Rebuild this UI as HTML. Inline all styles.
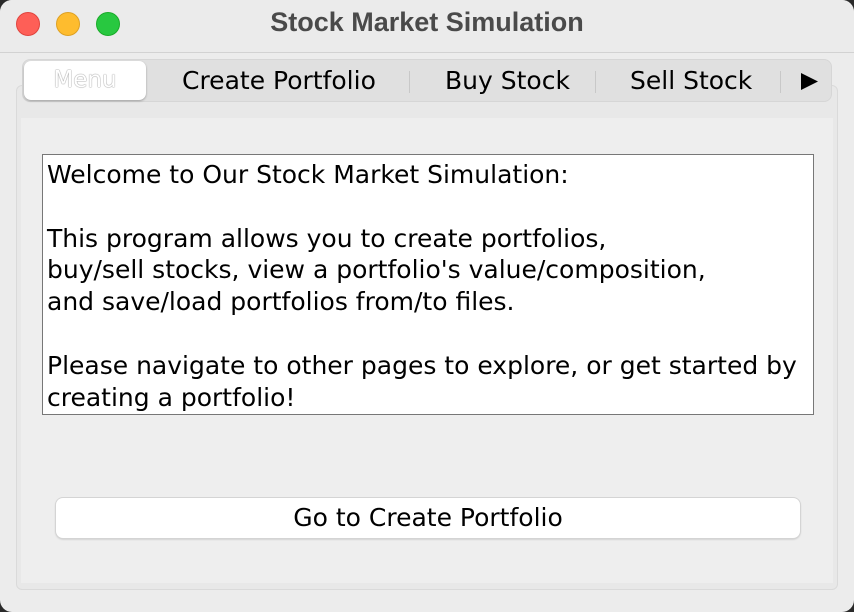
<!DOCTYPE html>
<html><head><style>
body{margin:0;width:854px;height:612px;background:#2a2a2a;overflow:hidden;font-family:"DejaVu Sans","Liberation Sans",sans-serif}
.win{position:absolute;left:0;top:0;width:854px;height:612px;background:#ececec;border-radius:12px;overflow:hidden}
.title{position:absolute;left:0;top:0;width:854px;height:52px;border-bottom:1px solid #d2d2d2;background:#ebebeb}
.dot{position:absolute;top:12px;width:24px;height:24px;border-radius:50%}
.t{position:absolute;left:0;width:854px;top:7px;text-align:center;font:bold 27px "Liberation Sans",sans-serif;color:#4a4a4a}
.panel{position:absolute;left:16px;top:85px;width:820px;height:503px;background:#e8e8e8;border:1px solid #dadada;border-radius:6px}
.inner{position:absolute;left:4px;top:32px;width:812px;height:465px;background:#eeeeee}
.tabs{position:absolute;left:22px;top:59px;width:810px;height:43px;background:#e0e0e0;border:1px solid #d6d6d6;border-radius:8px;box-sizing:border-box}
.tab{position:absolute;top:6px;font-size:25px;color:#000}
.sep{position:absolute;top:11px;width:1px;height:22px;background:#c8c8c8}
.sel{position:absolute;left:1px;top:1px;width:122px;height:39px;background:#fff;border-radius:7px;box-shadow:0 1px 2px rgba(0,0,0,.3);text-align:center;line-height:39px;font-size:23px;color:#fff;text-shadow:0 0 1px #888,0 0 1px #888}
.ta{position:absolute;left:42px;top:154px;width:772px;height:261px;background:#fff;border:1px solid #777;font-size:25px;line-height:31.8px;padding:4px 0 0 4px;box-sizing:border-box;color:#000;white-space:pre}
.btn{position:absolute;left:56px;top:498px;width:744px;height:40px;background:#fff;border-radius:7px;box-shadow:0 0 0 1px #d4d4d4,0 1px 2px rgba(0,0,0,.25);text-align:center;line-height:40px;font-size:25px}
</style></head><body><div class="win">
<div class="title"><div class="dot" style="left:16px;background:#fe5f57;border:1px solid #e0443e;box-sizing:border-box"></div><div class="dot" style="left:56px;background:#febc2e;border:1px solid #dea123;box-sizing:border-box"></div><div class="dot" style="left:96px;background:#28c840;border:1px solid #1aab29;box-sizing:border-box"></div><div class="t">Stock Market Simulation</div></div>
<div class="panel"><div class="inner"></div></div>
<div class="tabs">
<div class="sel">Menu</div>
<div class="tab" style="left:159px">Create Portfolio</div>
<div class="sep" style="left:386px"></div>
<div class="tab" style="left:422px">Buy Stock</div>
<div class="sep" style="left:572px"></div>
<div class="tab" style="left:607px">Sell Stock</div>
<div class="sep" style="left:757px"></div>
<svg style="position:absolute;left:777px;top:12px" width="19" height="19"><path d="M1 1 L18 9.5 L1 18 Z" fill="#000"/></svg>
</div>
<div class="ta">Welcome to Our Stock Market Simulation:

This program allows you to create portfolios,
buy/sell stocks, view a portfolio's value/composition,
and save/load portfolios from/to files.

Please navigate to other pages to explore, or get started by
creating a portfolio!</div>
<div class="btn">Go to Create Portfolio</div>
</div></body></html>
